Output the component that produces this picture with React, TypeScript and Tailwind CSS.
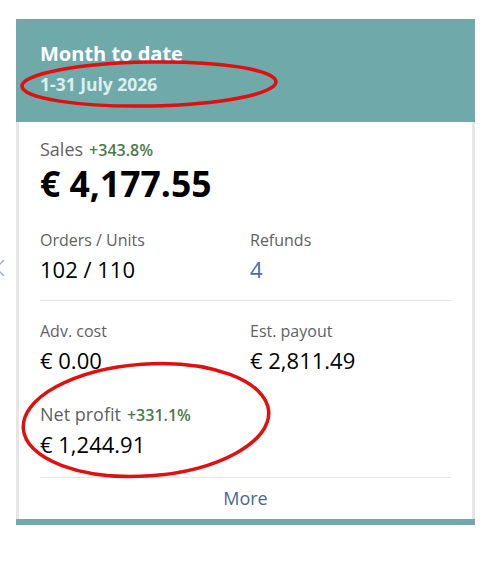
const font = { fontFamily: '"Open Sans", "Liberation Sans", sans-serif' }

function Stat({ label, value, valueClass = 'text-black' }: { label: string; value: string; valueClass?: string }) {
  return (
    <div>
      <div className="text-[16px] leading-5 text-[#5f5f5f]">{label}</div>
      <div className={`mt-1 text-[22px] leading-[30px] ${valueClass}`}>{value}</div>
    </div>
  )
}

export default function App() {
  return (
    <div className="relative h-[570px] w-[488px] overflow-hidden bg-white" style={font}>
      {/* partial arrow of the carousel, cut off on the left */}
      <svg className="absolute left-[-6px] top-[258px]" width="12" height="20" viewBox="0 0 12 20">
        <path d="M10 2 L2 10 L10 18" fill="none" stroke="#9fb3c4" strokeWidth="1.5" />
      </svg>

      <div className="ml-4 mt-[19px] w-[459px]">
        <div className="h-[103px] bg-[#6fa9aa] px-6 pt-[21px]">
          <h2 className="text-[20px] font-bold leading-7 text-white">Month to date</h2>
          <p className="mt-1 text-[17.5px] font-bold leading-6 text-[#dcefef]">1-31 July 2026</p>
        </div>

        <div className="border-x-[3px] border-[#e6e6e6] px-[21px] pt-[17px]">
          <div className="text-[18px] leading-5 text-[#5f5f5f]">
            Sales
            <span className="ml-1.5 text-[16px] font-semibold text-[#4b7a4b]">+343.8%</span>
          </div>
          <div className="mt-[3px] text-[35.5px] font-bold leading-10 text-black">€ 4,177.55</div>

          <div className="mt-[27px] grid grid-cols-[210px_1fr] pb-4">
            <Stat label="Orders / Units" value="102 / 110" />
            <Stat label="Refunds" value="4" valueClass="text-[#4a6ea8]" />
          </div>

          <div className="border-t border-[#e5e5e5] pt-5">
            <div className="grid grid-cols-[210px_1fr]">
              <Stat label="Adv. cost" value="€ 0.00" />
              <Stat label="Est. payout" value="€ 2,811.49" />
            </div>
            <div className="mt-[29px] pb-[18px]">
              <div className="text-[18px] leading-5 text-[#5f5f5f]">
                Net profit
                <span className="ml-1.5 text-[16px] font-semibold text-[#4b7a4b]">+331.1%</span>
              </div>
              <div className="mt-1 text-[22px] leading-[30px] text-black">€ 1,244.91</div>
            </div>
          </div>

          <div className="border-t border-[#e5e5e5] pb-[8px] pt-[8px] text-center">
            <a href="#" className="text-[18px] leading-6 text-[#4a6a8f]">More</a>
          </div>
        </div>
        <div className="h-[6px] bg-[#72a8aa]" />
      </div>

      {/* red annotation marks drawn over the card */}
      <svg className="pointer-events-none absolute left-0 top-0" width="488" height="570">
        <ellipse cx="149" cy="84" rx="127" ry="22" fill="none" stroke="#e01010" strokeWidth="3.5" transform="rotate(-1 149 84)" />
        <ellipse cx="146" cy="420" rx="123" ry="56" fill="none" stroke="#e01010" strokeWidth="3.5" transform="rotate(-4 146 420)" />
      </svg>
    </div>
  )
}
